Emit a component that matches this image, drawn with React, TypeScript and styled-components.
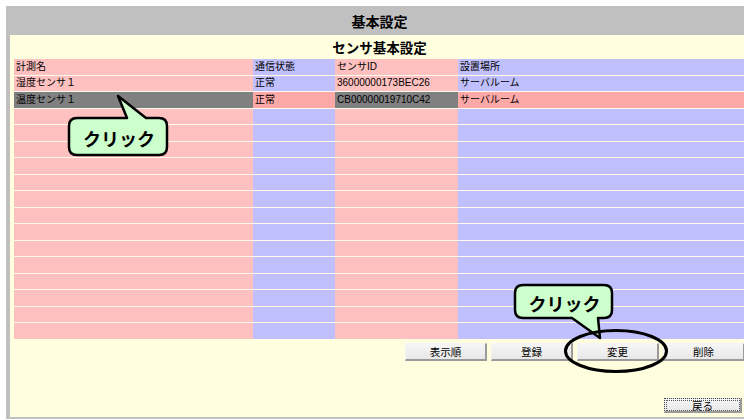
import React from "react";
import styled, { createGlobalStyle } from "styled-components";

const Global = createGlobalStyle`
  html, body { margin: 0; padding: 0; background: #ffffff; }
  body { font-family: "Liberation Sans", "Noto Sans CJK JP", sans-serif; }
`;

const Page = styled.div`
  position: relative;
  width: 744px;
  height: 419px;
  overflow: hidden;
  background: #ffffff;
`;

const Panel = styled.div`
  box-sizing: border-box;
  margin: 6px 0 0 6px;
  width: 747px;
  height: 415px;
  background: #c0c0c0;
  padding: 0 4px 4px 4px;
  display: flex;
  flex-direction: column;
`;

const Header = styled.div`
  height: 29px;
  display: flex;
  align-items: center;
  justify-content: center;
  font-family: "Noto Sans CJK JP", sans-serif;
  font-weight: 700;
  font-size: 14px;
  color: #000;
`;

const Inner = styled.div`
  box-sizing: border-box;
  flex: 1;
  background: #ffffe0;
  padding: 0 4px;
  display: flex;
  flex-direction: column;
`;

const SubTitle = styled.div`
  height: 24px;
  display: flex;
  align-items: center;
  justify-content: center;
  font-family: "Noto Sans CJK JP", sans-serif;
  font-weight: 700;
  font-size: 13.5px;
  color: #000;
`;

const Table = styled.div`
  display: grid;
  grid-template-columns: 239px 82px 123px 287px;
  grid-template-rows: repeat(17, 1fr);
  row-gap: 1px;
  height: 280px;
  background: #fff8ec;
`;

const Cell = styled.div<{ $bg: string }>`
  background: ${(p) => p.$bg};
  font-size: 10px;
  line-height: 1;
  color: #000;
  padding-left: 2px;
  display: flex;
  align-items: center;
  white-space: nowrap;
  overflow: hidden;
`;

const ButtonRow = styled.div`
  display: flex;
  justify-content: flex-end;
  gap: 4px;
  margin-top: 4px;
`;

const Button = styled.div`
  box-sizing: border-box;
  width: 82px;
  height: 18px;
  background: linear-gradient(#f6f6f6, #e8e8e8);
  border-top: 1px solid #f4f4f4;
  border-left: 1px solid #f4f4f4;
  border-right: 2px solid #9a9a9a;
  border-bottom: 2px solid #9a9a9a;
  font-family: "Noto Sans CJK JP", sans-serif;
  font-size: 10.5px;
  color: #000;
  display: flex;
  align-items: center;
  justify-content: center;
`;

const BackRow = styled.div`
  display: flex;
  justify-content: flex-end;
  margin-top: 37px;
  padding-right: 3px;
`;

const BackButton = styled(Button)`
  width: 78px;
  height: 15px;
  border: 1px dotted #444;
  border-right: 2px solid #9a9a9a;
  border-bottom: 2px solid #9a9a9a;
  outline: 1px dotted #555;
  outline-offset: -3px;
`;

const Overlay = styled.div<{ $x: number; $y: number; $w: number; $h: number }>`
  position: absolute;
  left: ${(p) => p.$x}px;
  top: ${(p) => p.$y}px;
  width: ${(p) => p.$w}px;
  height: ${(p) => p.$h}px;
  pointer-events: none;
`;

const CalloutLabel = styled.span<{ $cx: number; $cy: number }>`
  position: absolute;
  left: ${(p) => p.$cx}px;
  top: ${(p) => p.$cy}px;
  transform: translate(-50%, -50%);
  font-family: "Noto Sans CJK JP", sans-serif;
  font-weight: 700;
  font-size: 18px;
  line-height: 1;
  color: #000;
  white-space: nowrap;
`;

const PINK = "#ffc0c0";
const BLUE = "#c0c0ff";
const DARK = "#808080";
const HOT = "#ffa8a8";

const colColors = [PINK, BLUE, PINK, BLUE];
const selColors = [DARK, HOT, DARK, HOT];

const rows: string[][] = [
  ["計測名", "通信状態", "センサID", "設置場所"],
  ["湿度センサ１", "正常", "36000000173BEC26", "サーバルーム"],
  ["温度センサ１", "正常", "CB00000019710C42", "サーバルーム"],
];
while (rows.length < 17) rows.push(["", "", "", ""]);

type Pt = [number, number];

function Callout({
  x, y, w, h, tail, label,
}: { x: number; y: number; w: number; h: number; tail: [Pt, Pt, Pt]; label: string }) {
  // bounding area in page coords
  const xs = [x, x + w, ...tail.map((t) => t[0])];
  const ys = [y, y + h, ...tail.map((t) => t[1])];
  const minX = Math.min(...xs) - 3;
  const minY = Math.min(...ys) - 3;
  const maxX = Math.max(...xs) + 3;
  const maxY = Math.max(...ys) + 3;
  const r = 8;
  const lx = x - minX, ty = y - minY, rx = x + w - minX, by = y + h - minY;
  const t = tail.map(([a, b]) => [a - minX, b - minY]) as [Pt, Pt, Pt];
  const onTop = tail[1][1] < y;
  let d: string;
  if (onTop) {
    d = `M ${lx + r} ${ty} L ${t[0][0]} ${ty} L ${t[1][0]} ${t[1][1]} L ${t[2][0]} ${ty} L ${rx - r} ${ty}
      Q ${rx} ${ty} ${rx} ${ty + r} L ${rx} ${by - r} Q ${rx} ${by} ${rx - r} ${by}
      L ${lx + r} ${by} Q ${lx} ${by} ${lx} ${by - r} L ${lx} ${ty + r} Q ${lx} ${ty} ${lx + r} ${ty} Z`;
  } else {
    d = `M ${lx + r} ${ty} L ${rx - r} ${ty} Q ${rx} ${ty} ${rx} ${ty + r} L ${rx} ${by - r}
      Q ${rx} ${by} ${rx - r} ${by} L ${t[2][0]} ${by} L ${t[1][0]} ${t[1][1]} L ${t[0][0]} ${by}
      L ${lx + r} ${by} Q ${lx} ${by} ${lx} ${by - r} L ${lx} ${ty + r} Q ${lx} ${ty} ${lx + r} ${ty} Z`;
  }
  return (
    <Overlay $x={minX} $y={minY} $w={maxX - minX} $h={maxY - minY}>
      <svg width={maxX - minX} height={maxY - minY}>
        <path d={d} fill="#ccffcc" stroke="#000" strokeWidth={2.5} strokeLinejoin="round" />
      </svg>
      <CalloutLabel $cx={lx + w / 2 + 1} $cy={ty + h / 2 + 1.5}>{label}</CalloutLabel>
    </Overlay>
  );
}

export default function App() {
  return (
    <Page>
      <Global />
      <Panel>
        <Header>基本設定</Header>
        <Inner>
          <SubTitle>センサ基本設定</SubTitle>
          <Table>
            {rows.map((row, ri) =>
              row.map((text, ci) => (
                <Cell key={`${ri}-${ci}`} $bg={ri === 2 ? selColors[ci] : colColors[ci]}>
                  {text}
                </Cell>
              ))
            )}
          </Table>
          <ButtonRow>
            <Button>表示順</Button>
            <Button>登録</Button>
            <Button>変更</Button>
            <Button>削除</Button>
          </ButtonRow>
          <BackRow>
            <BackButton>戻る</BackButton>
          </BackRow>
        </Inner>
      </Panel>
      <Callout
        x={69}
        y={118}
        w={98}
        h={37}
        tail={[[127, 118], [118, 96], [146, 118]]}
        label="クリック"
      />
      <Callout
        x={515}
        y={285}
        w={97}
        h={33}
        tail={[[572, 318], [600, 338], [598, 318]]}
        label="クリック"
      />
      <Overlay $x={562} $y={327} $w={110} $h={50}>
        <svg width={110} height={50}>
          <ellipse cx={54} cy={24} rx={50.5} ry={20.5} fill="none" stroke="#000" strokeWidth={3} />
        </svg>
      </Overlay>
    </Page>
  );
}
